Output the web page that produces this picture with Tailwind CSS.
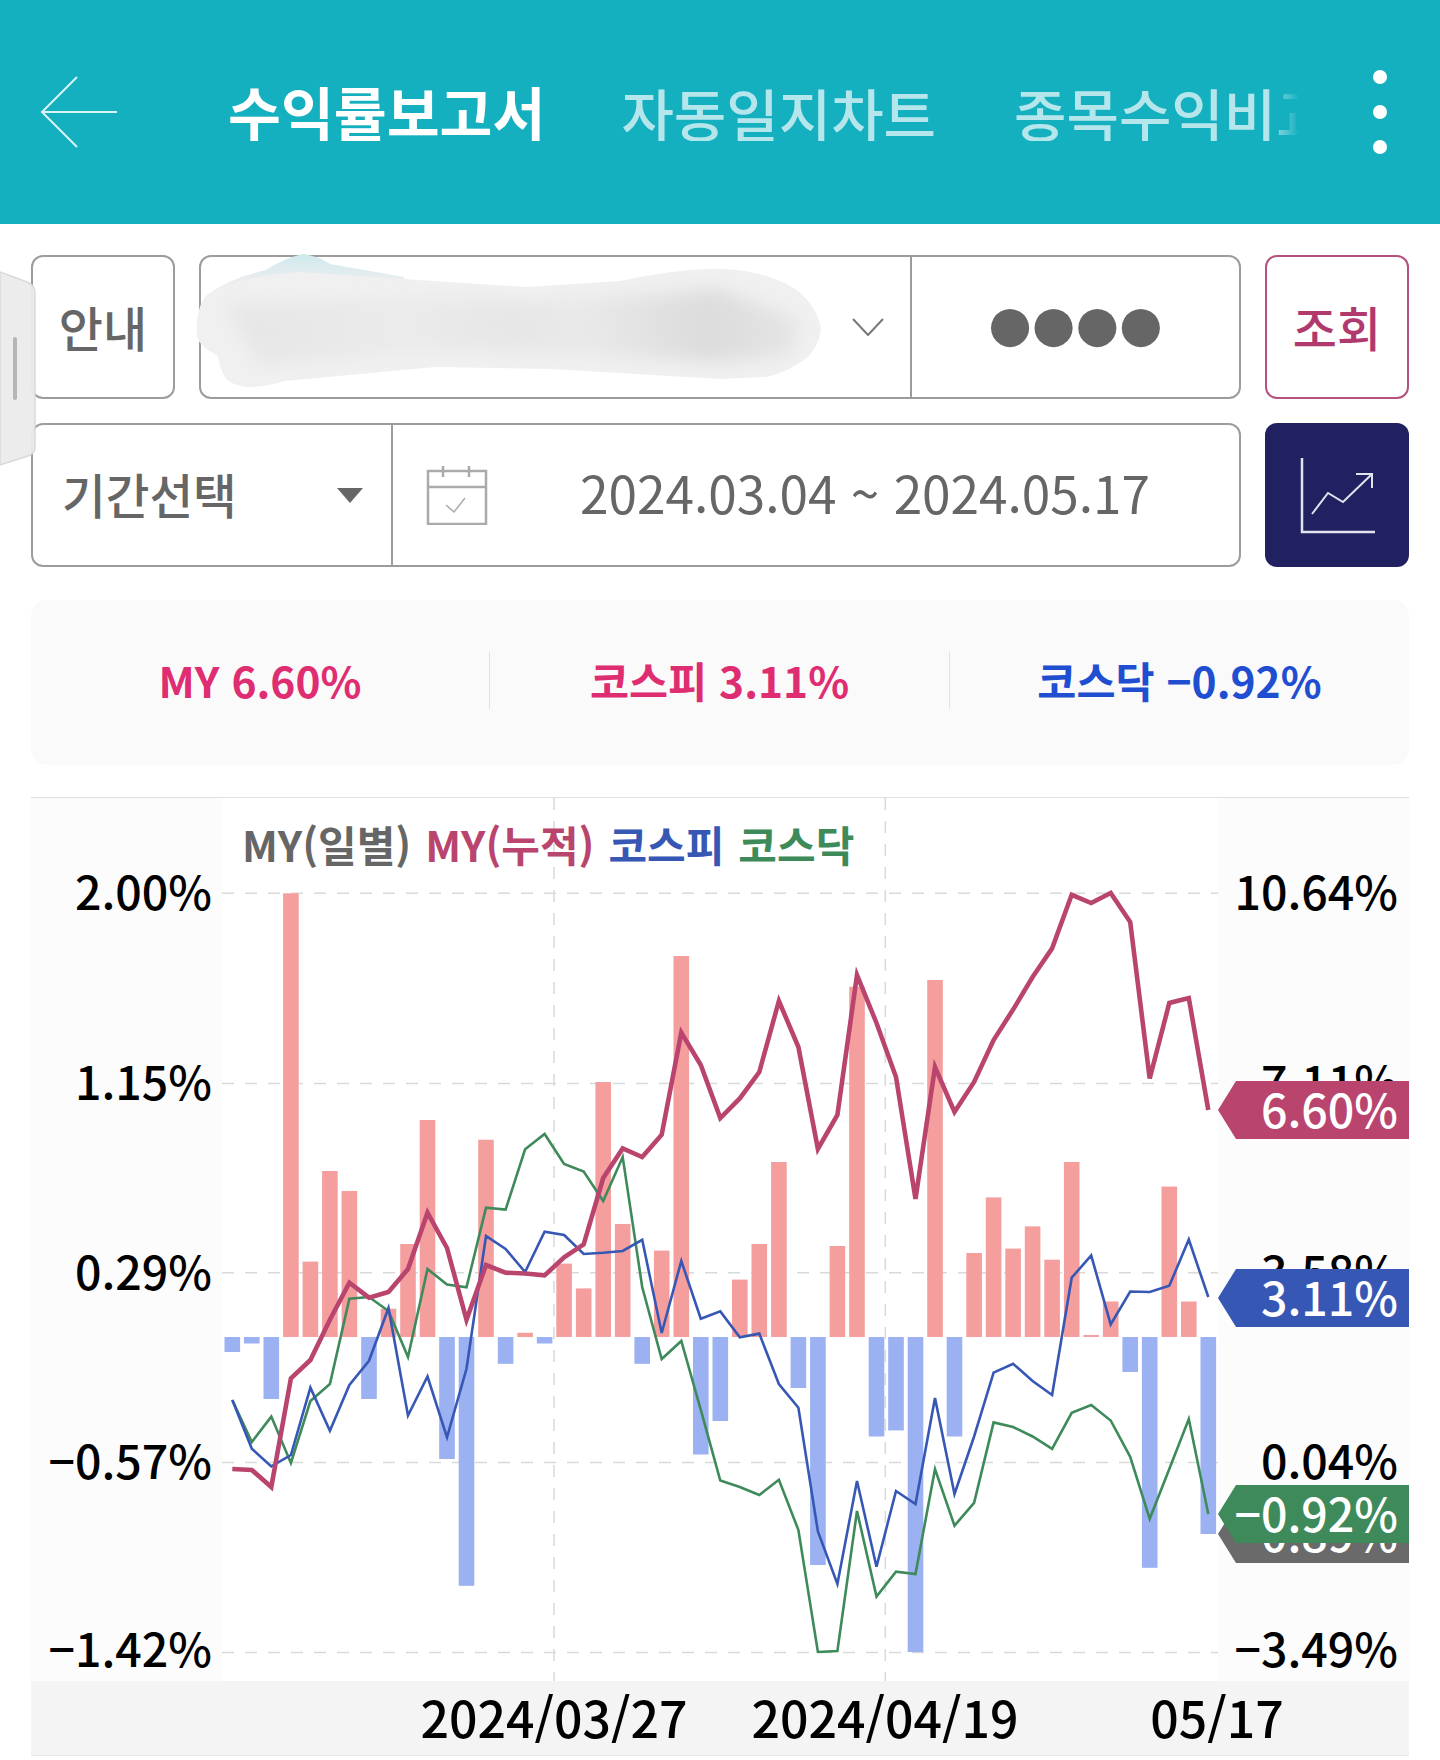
<!DOCTYPE html>
<html lang="ko">
<head>
<meta charset="UTF-8">
<meta name="viewport" content="width=device-width, initial-scale=1.0">
<title>수익률보고서</title>
<script src="https://cdn.jsdelivr.net/npm/@tailwindcss/browser@4"></script>
</head>
<body class="bg-white [font-family:'Noto_Sans_CJK_KR',sans-serif]">
<div class="relative w-[1440px] h-[1760px] overflow-hidden">

  <!-- top bar -->
  <header class="flex items-center h-[224px] bg-[#14b0c0]">
    <svg class="ml-[40px] w-[78px] h-[72px] shrink-0" viewBox="0 0 78 72" fill="none" stroke="#d9f3f6" stroke-width="2">
      <path d="M37 1L2 36L37 71M2 36H77"/>
    </svg>
    <div class="flex items-center gap-[76px] ml-[110px] w-[1071px] overflow-hidden whitespace-nowrap leading-none [mask-image:linear-gradient(to_right,black_97%,transparent)]">
      <span class="text-[57.5px] font-bold text-white">수익률보고서</span>
      <span class="text-[57px] font-medium text-[#b5e6ec]">자동일지차트</span>
      <span class="ml-[2px] text-[57px] font-medium text-[#b5e6ec]">종목수익비교</span>
    </div>
    <div class="flex flex-col gap-[21px] ml-[74px]">
      <div class="w-[14px] h-[14px] rounded-full bg-white"></div>
      <div class="w-[14px] h-[14px] rounded-full bg-white"></div>
      <div class="w-[14px] h-[14px] rounded-full bg-white"></div>
    </div>
  </header>

  <main class="px-[31px] pt-[31px]">
    <!-- account row -->
    <div class="flex h-[144px]">
      <div class="flex items-center justify-center w-[144px] pb-[3px] border-2 border-[#9c9c9c] rounded-[12px] text-[48px] font-medium text-[#666666]">안내</div>
      <div class="flex ml-[24px] w-[1042px] border-2 border-[#9c9c9c] rounded-[12px]">
        <div class="flex items-center justify-end w-[711px] border-r-2 border-[#9c9c9c] pr-[26px]">
          <svg class="w-[32px] h-[18px]" viewBox="0 0 32 18" fill="none" stroke="#777777" stroke-width="2"><path d="M1 1L16 17L31 1"/></svg>
        </div>
        <div class="flex-1 flex items-center justify-center pb-[6px] [font-family:'DejaVu_Sans',sans-serif] text-[50px] leading-none text-[#666666]">●●●●</div>
      </div>
      <div class="flex items-center justify-center ml-[24px] w-[144px] pb-[3px] border-2 border-[#b5517f] rounded-[12px] text-[48px] font-medium text-[#b03a6e]">조회</div>
    </div>

    <!-- period row -->
    <div class="flex h-[144px] mt-[24px]">
      <div class="flex w-[1210px] border-2 border-[#9c9c9c] rounded-[12px]">
        <div class="flex items-center w-[360px] border-r-2 border-[#9c9c9c] pl-[29px]">
          <span class="pb-[2px] text-[47.5px] font-medium text-[#666666]">기간선택</span>
          <div class="ml-[100px] w-0 h-0 border-x-[13px] border-x-transparent border-t-[15px] border-t-[#666666]"></div>
        </div>
        <div class="flex items-center flex-1 pl-[33px]">
          <svg class="w-[62px] h-[60px] shrink-0" viewBox="0 0 62 60" fill="none" stroke="#aaaaaa" stroke-width="2.5">
            <path d="M2 6H60V59H2ZM2 22H60M17 1V12M43 1V12"/>
            <path d="M20 40L28 47L39 33" stroke-width="1.5"/>
          </svg>
          <span class="ml-[92px] pb-[6px] text-[51.3px] leading-none text-[#666666]">2024.03.04 ~ 2024.05.17</span>
        </div>
      </div>
      <div class="flex items-center justify-center ml-[24px] w-[144px] bg-[#212161] rounded-[12px]">
        <svg class="w-[143px] h-[143px]" viewBox="0 0 143 143" fill="none" stroke="#e3e3f0" stroke-width="2.5">
          <path d="M36 34V108H109"/>
          <path d="M46 90L62 69L77 78L106 50M90 50H106V64" stroke-width="2"/>
        </svg>
      </div>
    </div>

    <!-- summary panel -->
    <div class="flex items-center h-[165px] mt-[33px] pb-[4px] bg-[#fafafa] rounded-[16px] text-[42.5px] font-bold leading-none">
      <div class="w-[458px] text-center text-[#df2d72]">MY 6.60%</div>
      <div class="w-px h-[57px] bg-[#e2e2e2]"></div>
      <div class="w-[459px] text-center text-[#df2d72]">코스피 3.11%</div>
      <div class="w-px h-[57px] bg-[#e2e2e2]"></div>
      <div class="flex-1 text-center text-[#1f4fd0]">코스닥 −0.92%</div>
    </div>

    <!-- chart -->
    <section class="relative h-[958px] mt-[32px] border-t border-[#e0e0e0] font-medium text-black text-[46.5px] leading-none">
      <div class="absolute left-0 top-0 w-[191px] h-[883px] bg-[#fcfcfc]"></div>
      <div class="absolute right-0 top-0 w-[191px] h-[883px] bg-[#fcfcfc]"></div>

      <svg class="absolute left-0 top-0 w-[1378px] h-[958px]" viewBox="31 797 1378 958" fill="none">
        <g stroke="#d9d9d9" stroke-width="1.5" stroke-dasharray="12 11">
          <path d="M222 892.3H1218M222 1082.5H1218M222 1271.7H1218M222 1461.6H1218M222 1651.4H1218"/>
          <path d="M554 797V1680M885.3 797V1680"/>
        </g>
        <g fill="#f49e9e">
          <rect x="283.1" y="892.3" width="15.6" height="443.7"/>
          <rect x="302.6" y="1260.6" width="15.6" height="75.4"/>
          <rect x="322.1" y="1170" width="15.6" height="166"/>
          <rect x="341.6" y="1190" width="15.6" height="146"/>
          <rect x="380.7" y="1307.7" width="15.6" height="28.3"/>
          <rect x="400.2" y="1243" width="15.6" height="93"/>
          <rect x="419.7" y="1119" width="15.6" height="217"/>
          <rect x="478.2" y="1138.7" width="15.6" height="197.3"/>
          <rect x="517.3" y="1331.8" width="15.6" height="4.2"/>
          <rect x="556.3" y="1262.6" width="15.6" height="73.4"/>
          <rect x="575.9" y="1287.4" width="15.6" height="48.6"/>
          <rect x="595.4" y="1081" width="15.6" height="255"/>
          <rect x="614.9" y="1223" width="15.6" height="113"/>
          <rect x="653.9" y="1249.6" width="15.6" height="86.4"/>
          <rect x="673.5" y="955" width="15.6" height="381"/>
          <rect x="732" y="1278.6" width="15.6" height="57.4"/>
          <rect x="751.5" y="1243" width="15.6" height="93"/>
          <rect x="771.1" y="1161" width="15.6" height="175"/>
          <rect x="829.6" y="1245" width="15.6" height="91"/>
          <rect x="849.2" y="985.7" width="15.6" height="350.3"/>
          <rect x="927.2" y="979" width="15.6" height="357"/>
          <rect x="966.3" y="1252" width="15.6" height="84"/>
          <rect x="985.8" y="1196.4" width="15.6" height="139.6"/>
          <rect x="1005.3" y="1247.6" width="15.6" height="88.4"/>
          <rect x="1024.8" y="1225.4" width="15.6" height="110.6"/>
          <rect x="1044.3" y="1258.7" width="15.6" height="77.3"/>
          <rect x="1063.9" y="1161" width="15.6" height="175"/>
          <rect x="1083.4" y="1334" width="15.6" height="2"/>
          <rect x="1102.9" y="1300.5" width="15.6" height="35.5"/>
          <rect x="1161.5" y="1185.6" width="15.6" height="150.4"/>
          <rect x="1181" y="1300.5" width="15.6" height="35.5"/>
        </g>
        <g fill="#9bb1f1">
          <rect x="224.5" y="1336" width="15.6" height="15"/>
          <rect x="244" y="1336" width="15.6" height="6.5"/>
          <rect x="263.5" y="1336" width="15.6" height="62"/>
          <rect x="361.2" y="1336" width="15.6" height="62"/>
          <rect x="439.2" y="1336" width="15.6" height="122"/>
          <rect x="458.7" y="1336" width="15.6" height="248.8"/>
          <rect x="497.8" y="1336" width="15.6" height="26.8"/>
          <rect x="536.8" y="1336" width="15.6" height="6.5"/>
          <rect x="634.4" y="1336" width="15.6" height="26.8"/>
          <rect x="693" y="1336" width="15.6" height="117.5"/>
          <rect x="712.5" y="1336" width="15.6" height="84"/>
          <rect x="790.6" y="1336" width="15.6" height="51"/>
          <rect x="810.1" y="1336" width="15.6" height="228"/>
          <rect x="868.7" y="1336" width="15.6" height="99.5"/>
          <rect x="888.2" y="1336" width="15.6" height="93.4"/>
          <rect x="907.7" y="1336" width="15.6" height="315"/>
          <rect x="946.7" y="1336" width="15.6" height="99.5"/>
          <rect x="1122.4" y="1336" width="15.6" height="35"/>
          <rect x="1141.9" y="1336" width="15.6" height="230.8"/>
          <rect x="1200.5" y="1336" width="15.6" height="197"/>
        </g>
        <polyline stroke="#3f8a5a" stroke-width="2.6" points="232.3,1399 251.8,1441 271.3,1415.6 290.9,1462 310.4,1400 329.9,1383 349.4,1297.8 369,1296 388.5,1310 408,1356 427.5,1268 447,1283.6 466.5,1286.3 486,1206.7 505.6,1208.6 525.1,1148.3 544.6,1133 564.1,1163 583.7,1170.5 603.2,1200 622.7,1156 642.2,1286 661.7,1358 681.3,1340 700.8,1408.8 720.3,1479.6 739.8,1486 759.3,1494 778.9,1478.8 798.4,1529 817.9,1651 837.4,1650 857,1510 876.5,1595.5 896,1570.6 915.5,1573 935,1468 954.5,1524.7 974.1,1501.8 993.6,1421.4 1013.1,1426 1032.6,1435.5 1052.1,1447.8 1071.7,1411.8 1091.2,1404 1110.7,1419.5 1130.2,1455.8 1149.7,1517.8 1169.3,1468 1188.8,1418 1208.3,1513"/>
        <polyline stroke="#3757b5" stroke-width="2.6" points="232.3,1399 251.8,1447.8 271.3,1465.4 290.9,1454 310.4,1386.6 329.9,1429.8 349.4,1384 369,1359.8 388.5,1307 408,1414.5 427.5,1375.5 447,1436.3 466.5,1367.8 486,1235 505.6,1248 525.1,1271 544.6,1230.8 564.1,1234 583.7,1253 603.2,1251.8 622.7,1250 642.2,1238.8 661.7,1332 681.3,1260 700.8,1317.7 720.3,1310.4 739.8,1336.4 759.3,1332.6 778.9,1383 798.4,1406.8 817.9,1530.5 837.4,1583 857,1480 876.5,1565.7 896,1490 915.5,1503 935,1397 954.5,1493 974.1,1435.5 993.6,1371.6 1013.1,1362.8 1032.6,1380 1052.1,1394 1071.7,1276.7 1091.2,1254.5 1110.7,1323.4 1130.2,1290.5 1149.7,1291 1169.3,1284.8 1188.8,1238.5 1208.3,1296"/>
        <polyline stroke="#b9456f" stroke-width="4.6" points="232.3,1468 251.8,1469 271.3,1486 290.9,1377.4 310.4,1359 329.9,1318.8 349.4,1281.7 369,1296.6 388.5,1291 408,1268 427.5,1211.7 447,1247 466.5,1318.8 486,1264 505.6,1271.7 525.1,1272.5 544.6,1274.4 564.1,1256.4 583.7,1243.4 603.2,1177 622.7,1147.5 642.2,1156 661.7,1133.8 681.3,1031.6 700.8,1064 720.3,1117 739.8,1097.4 759.3,1071 778.9,1000 798.4,1046 817.9,1148 837.4,1114 857,974 876.5,1022 896,1076 915.5,1198 935,1066 954.5,1111 974.1,1081 993.6,1039 1013.1,1008.6 1032.6,976 1052.1,947.4 1071.7,893.8 1091.2,902 1110.7,892 1130.2,921 1149.7,1077.5 1169.3,1002 1188.8,997 1208.3,1109"/>
      </svg>

      <!-- legend -->
      <div class="absolute left-[211px] top-[25px] flex gap-[14px] text-[42px] font-bold">
        <span class="text-[#666666]">MY(일별)</span>
        <span class="text-[#b9456f]">MY(누적)</span>
        <span class="text-[#3757b5]">코스피</span>
        <span class="text-[#3f8a5a]">코스닥</span>
      </div>

      <!-- left axis -->
      <span class="absolute right-[1197px] top-[69px]">2.00%</span>
      <span class="absolute right-[1197px] top-[259px]">1.15%</span>
      <span class="absolute right-[1197px] top-[449px]">0.29%</span>
      <span class="absolute right-[1197px] top-[638px]">−0.57%</span>
      <span class="absolute right-[1197px] top-[826px]">−1.42%</span>

      <!-- right axis -->
      <span class="absolute right-[11px] top-[69px]">10.64%</span>
      <span class="absolute right-[11px] top-[259px]">7.11%</span>
      <span class="absolute right-[11px] top-[449px]">3.58%</span>
      <span class="absolute right-[11px] top-[638px]">0.04%</span>
      <span class="absolute right-[11px] top-[826px]">−3.49%</span>

      <!-- current value tags -->
      <div class="absolute right-0 top-[707px] flex items-center justify-end w-[191px] h-[58px] pr-[11px] pb-[3px] bg-[#6a6a6a] text-white [clip-path:polygon(18px_0,100%_0,100%_100%,18px_100%,0_50%)]">−0.89%</div>
      <div class="absolute right-0 top-[283px] flex items-center justify-end w-[191px] h-[58px] pr-[11px] pb-[3px] bg-[#b9456f] text-white [clip-path:polygon(18px_0,100%_0,100%_100%,18px_100%,0_50%)]">6.60%</div>
      <div class="absolute right-0 top-[471px] flex items-center justify-end w-[191px] h-[58px] pr-[11px] pb-[3px] bg-[#3757b5] text-white [clip-path:polygon(18px_0,100%_0,100%_100%,18px_100%,0_50%)]">3.11%</div>
      <div class="absolute right-0 top-[687px] flex items-center justify-end w-[191px] h-[58px] pr-[11px] pb-[3px] bg-[#3f8a5a] text-white [clip-path:polygon(18px_0,100%_0,100%_100%,18px_100%,0_50%)]">−0.92%</div>

      <!-- date axis -->
      <div class="absolute left-0 right-0 top-[883px] h-[75px] bg-[#f4f4f4] border-b border-[#e6e6e6] text-[50px]">
        <span class="absolute left-[523px] top-[10px] -translate-x-1/2">2024/03/27</span>
        <span class="absolute left-[854px] top-[10px] -translate-x-1/2">2024/04/19</span>
        <span class="absolute left-[1186px] top-[10px] -translate-x-1/2">05/17</span>
      </div>
    </section>
  </main>

  <!-- scribbled-out account name and the edge handle lie over the form -->
  <svg class="absolute left-0 top-0 w-[1440px] h-[1760px] pointer-events-none" viewBox="0 0 1440 1760">
    <defs>
      <linearGradient id="peak" x1="0" x2="0" y1="254" y2="285" gradientUnits="userSpaceOnUse">
        <stop offset="0" stop-color="#cfe9ee"/>
        <stop offset="1" stop-color="#eeeeee"/>
      </linearGradient>
      <linearGradient id="core" x1="240" x2="790" y1="0" y2="0" gradientUnits="userSpaceOnUse">
        <stop offset="0" stop-color="#e6e6e6"/>
        <stop offset="0.3" stop-color="#ebebeb"/>
        <stop offset="0.5" stop-color="#e6e6e6"/>
        <stop offset="0.62" stop-color="#e9e9e9"/>
        <stop offset="0.85" stop-color="#dcdcdc"/>
        <stop offset="1" stop-color="#e4e4e4"/>
      </linearGradient>
      <filter id="soft" x="-10%" y="-30%" width="120%" height="160%"><feGaussianBlur stdDeviation="9"/></filter>
      <clipPath id="blobClip">
        <path d="M197 321Q199 303 207 295Q240 276 300 272L404 279L526 287L620 281Q680 268 720 269Q766 270 798 291Q818 308 821 329Q819 345 809 356Q790 372 766 377L720 379L551 369L436 367L285 381Q265 387 248 387Q230 385 225 377Q219 367 218 356Q200 347 197 337Z"/>
      </clipPath>
    </defs>
    <path fill="url(#peak)" d="M207 295Q230 278 266 270Q285 258 303 254Q318 256 330 264L404 277L400 300H215Z"/>
    <g clip-path="url(#blobClip)">
      <rect x="190" y="260" width="640" height="130" fill="#f0f0f0"/>
      <path fill="url(#core)" filter="url(#soft)" d="M225 305L404 297L526 302L720 290L800 320L790 355L720 362L551 352L436 350L260 365Z"/>
    </g>
    <path fill="#ebebeb" fill-opacity="0.95" stroke="#d9d9d9" stroke-width="1.5" d="M0 272L27 282Q35 285 35 293V448Q35 453 28 456L0 465Z"/>
    <rect x="13" y="337" width="4" height="63" rx="2" fill="#b5b5b5"/>
  </svg>
</div>
</body>
</html>
